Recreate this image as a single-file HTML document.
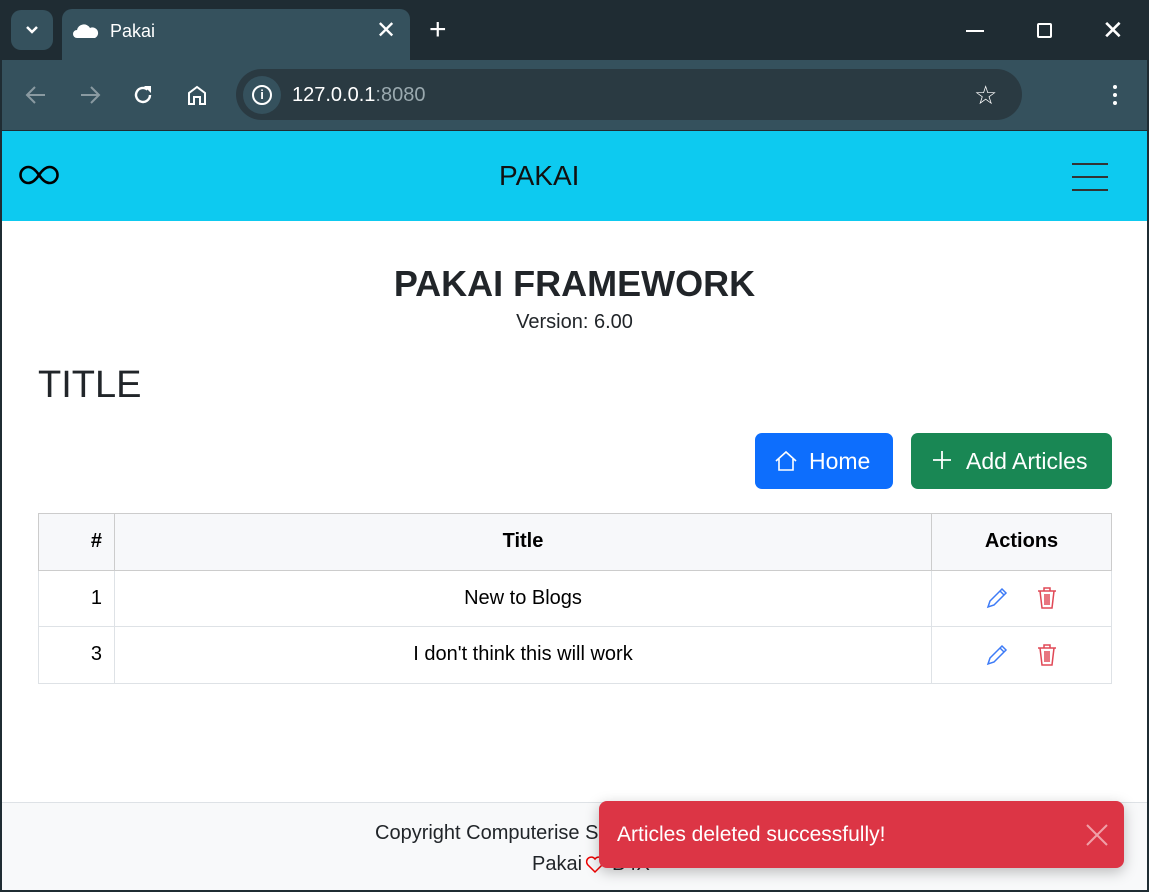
<!DOCTYPE html>
<html><head><style>
*{margin:0;padding:0;box-sizing:border-box}
body{width:1149px;height:892px;overflow:hidden;background:#1f2c33;font-family:"Liberation Sans",sans-serif;position:relative}
.abs{position:absolute}
.tab{left:62px;top:9px;width:348px;height:52px;background:#35515d;border-radius:10px 10px 0 0}
.tb{left:2px;top:60px;width:1145px;height:70px;background:#35515d}
.addr{left:236px;top:69px;width:786px;height:51px;background:#2a3a42;border-radius:26px}
.page{left:2px;top:131px;width:1145px;height:759px;background:#fff}
.nav{left:2px;top:131px;width:1145px;height:90px;background:#0dcaf0}
.w{color:#fff}
table{border-collapse:collapse;position:absolute;left:38px;top:513px;width:1074px;font-size:20px}
td,th{border:1px solid #dee2e6;height:56.5px}
th{background:#f7f8fa;border-color:#ccc}
</style></head><body>
<div class="abs" style="left:11px;top:10px;width:42px;height:40px;background:#35515d;border-radius:10px"></div>
<svg class="abs" style="left:24px;top:24px" width="16" height="12"><path d="M3 3l5 5 5-5" stroke="#fff" stroke-width="2.5" fill="none"/></svg>
<div class="abs tab"></div>
<svg class="abs" style="left:73px;top:22px" width="26" height="18"><path d="M4 16a4 4 0 010-8 7 7 0 0113-2 5 5 0 015 10z" fill="#fff"/></svg>
<div class="abs w" style="left:110px;top:21px;font-size:18px">Pakai</div>
<div class="abs w" style="left:376px;top:16px;font-size:24px">✕</div>
<div class="abs w" style="left:429px;top:13px;font-size:30px">+</div>
<div class="abs" style="left:966px;top:30px;width:18px;height:2px;background:#fff"></div>
<div class="abs" style="left:1037px;top:23px;width:15px;height:15px;border:2px solid #fff;border-radius:2px"></div>
<div class="abs w" style="left:1102px;top:15px;font-size:26px">✕</div>
<div class="abs tb"></div>
<svg class="abs" style="left:24px;top:84px" width="24" height="22"><path d="M21 11H4M11 3l-8 8 8 8" stroke="#8a9aa1" stroke-width="2" fill="none"/></svg>
<svg class="abs" style="left:78px;top:84px" width="24" height="22"><path d="M3 11h17M13 3l8 8-8 8" stroke="#8a9aa1" stroke-width="2" fill="none"/></svg>
<svg class="abs" style="left:132px;top:84px" width="22" height="22"><path d="M18 11a7 7 0 11-2.5-5.4" stroke="#fff" stroke-width="2.4" fill="none"/><path d="M12 2h7v7z" fill="#fff"/></svg>
<svg class="abs" style="left:186px;top:84px" width="22" height="22"><path d="M3 20V9l8-6 8 6v11h-5v-7h-6v7z" stroke="#fff" stroke-width="2" fill="none"/></svg>
<div class="abs addr"></div>
<div class="abs" style="left:243px;top:76px;width:38px;height:38px;border-radius:50%;background:#35515d"></div>
<div class="abs" style="left:252px;top:85px;width:20px;height:20px;border:2px solid #fff;border-radius:50%;color:#fff;font-size:13px;text-align:center;line-height:16px;font-weight:bold">i</div>
<div class="abs" style="left:292px;top:84px;font-size:20px;color:#fff">127.0.0.1<span style="color:#9aa9af">:8080</span></div>
<div class="abs w" style="left:974px;top:80px;font-size:26px">☆</div>
<div class="abs" style="left:1113px;top:85px;width:4px;height:4px;border-radius:50%;background:#fff;box-shadow:0 8px 0 #fff,0 16px 0 #fff"></div>
<div class="abs page"></div>
<div class="abs nav"></div>
<svg class="abs" style="left:19px;top:164px" width="40" height="22"><path d="M20 11C16 5 13 3 9.5 3a8 8 0 000 16C13 19 16 17 20 11s7-8 10.5-8a8 8 0 010 16C27 19 24 17 20 11z" stroke="#000" stroke-width="2.6" fill="none"/></svg>
<div class="abs" style="left:499px;top:160px;font-size:28px;color:#111">PAKAI</div>
<div class="abs" style="left:1072px;top:163px;width:36px;height:2px;background:#333;box-shadow:0 13px 0 #333,0 26px 0 #333"></div>
<div class="abs" style="left:0;width:1149px;top:263px;text-align:center;font-size:36px;color:#212529;font-weight:bold;letter-spacing:0px">PAKAI FRAMEWORK</div>
<div class="abs" style="left:0;width:1149px;top:311px;text-align:center;font-size:20px;color:#212529">Version: 6.00</div>
<div class="abs" style="left:38px;top:364px;font-size:38px;color:#212529">TITLE</div>
<div class="abs w" style="left:755px;top:433px;width:138px;height:56px;background:#0d6efd;border-radius:7px;font-size:23px;line-height:56px;padding-left:54px">Home</div>
<svg class="abs" style="left:774px;top:449px" width="24" height="24"><path d="M2 12L12 3l10 9M5 10v11h14V10" stroke="#fff" stroke-width="1.6" fill="none"/></svg>
<div class="abs w" style="left:911px;top:433px;width:201px;height:56px;background:#198754;border-radius:7px;font-size:23px;line-height:56px;padding-left:55px">Add Articles</div>
<svg class="abs" style="left:932px;top:450px" width="20" height="20"><path d="M10 1v18M1 10h18" stroke="#fff" stroke-width="1.8"/></svg>
<table>
<tr><th style="width:76px;text-align:right;padding-right:12px">#</th><th>Title</th><th style="width:180px">Actions</th></tr>
<tr><td style="text-align:right;padding-right:12px">1</td><td style="text-align:center">New to Blogs</td><td></td></tr>
<tr><td style="text-align:right;padding-right:12px">3</td><td style="text-align:center">I don't think this will work</td><td></td></tr>
</table>
<svg class="abs" style="left:985px;top:586px" width="24" height="24"><path d="M3 21l2-6L17 3l4 4L9 19zM15 5l4 4" stroke="#3d7bf7" stroke-width="1.5" fill="none"/></svg>
<svg class="abs" style="left:1036px;top:586px" width="22" height="24"><path d="M2 5h18M8 5V2h6v3M4 5l2 17h10l2-17M9 8v11M11 8v11M13 8v11" stroke="#e04856" stroke-width="1.5" fill="none"/></svg>
<svg class="abs" style="left:985px;top:643px" width="24" height="24"><path d="M3 21l2-6L17 3l4 4L9 19zM15 5l4 4" stroke="#3d7bf7" stroke-width="1.5" fill="none"/></svg>
<svg class="abs" style="left:1036px;top:643px" width="22" height="24"><path d="M2 5h18M8 5V2h6v3M4 5l2 17h10l2-17M9 8v11M11 8v11M13 8v11" stroke="#e04856" stroke-width="1.5" fill="none"/></svg>
<div class="abs" style="left:2px;top:802px;width:1145px;height:88px;background:#f8f9fa;border-top:1px solid #dee2e6"></div>
<div class="abs" style="left:375px;top:822px;font-size:20px;color:#212529">Copyright Computerise S</div>
<div class="abs" style="left:532px;top:853px;font-size:20px;color:#212529">Pakai</div>
<svg class="abs" style="left:585px;top:855px" width="20" height="19"><path d="M10 17L2.5 9.5A4.5 4.5 0 0110 4a4.5 4.5 0 017.5 5.5z" stroke="#e00" stroke-width="1.5" fill="none"/></svg>
<div class="abs" style="left:612px;top:853px;font-size:20px;color:#212529">B4X</div>
<div class="abs" style="left:599px;top:801px;width:525px;height:67px;background:#dc3545;border-radius:8px;box-shadow:0 4px 14px rgba(0,0,0,.25)"></div>
<div class="abs w" style="left:617px;top:823px;font-size:21px">Articles deleted successfully!</div>
<svg class="abs" style="left:1085px;top:823px" width="24" height="24"><path d="M2 2l20 20M22 2L2 22" stroke="#f0a0a8" stroke-width="2"/></svg>
</body></html>
